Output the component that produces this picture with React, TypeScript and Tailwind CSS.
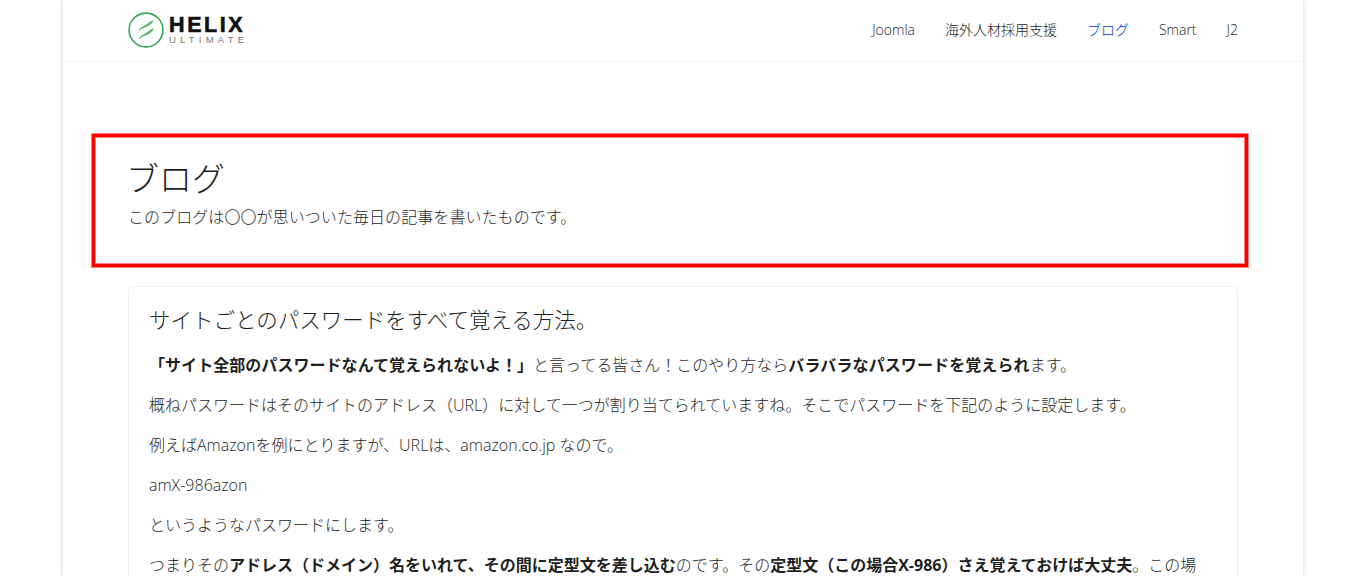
const jp = "font-['Open_Sans','Noto_Sans_CJK_JP',sans-serif]";

function Logo() {
  return (
    <div className="flex items-center gap-[5px]">
      <svg className="-mt-[2px]" width="36" height="36" viewBox="0 0 36 36" fill="none">
        <circle cx="18" cy="18" r="16.9" stroke="#34a853" strokeWidth="1.6" />
        <path d="M10.8 19.5C10.8 15.5 15 14.8 18 12.8C20.5 11 22.5 9 25.2 8C24.6 11.6 21.8 13.4 18.6 14.8C15.5 16.2 12.4 16.8 10.8 19.5Z" fill="#58b96c" />
        <path d="M11.3 27.5C11.3 23.5 15.5 22.8 18.5 20.8C21 19 23 17 25.7 16C25.1 19.6 22.3 21.4 19.1 22.8C16 24.2 12.9 24.8 11.3 27.5Z" fill="#58b96c" />
      </svg>
      <div className="flex flex-col leading-none font-['Liberation_Sans',sans-serif]">
        <span className="text-[21.5px] leading-[17px] font-bold text-[#111] tracking-[2.6px] [-webkit-text-stroke:0.6px_#111]">HELIX</span>
        <span className="text-[9.5px] leading-[10px] mt-[1px] font-normal text-[#777] tracking-[4.2px]">ULTIMATE</span>
      </div>
    </div>
  );
}

function Header() {
  const items = [
    { t: "Joomla" },
    { t: "海外人材採用支援" },
    { t: "ブログ", active: true },
    { t: "Smart" },
    { t: "J2" },
  ];
  return (
    <header className="h-[62px] border-b border-[#f5f5f5] flex items-center justify-between pl-[65px] pr-[65px]">
      <Logo />
      <nav className="flex gap-[30px] text-[14px] font-light -mt-[3px]">
        {items.map((i) => (
          <a key={i.t} className={i.active ? "text-[#0038d8]" : "text-[#1c1c1c]"}>{i.t}</a>
        ))}
      </nav>
    </header>
  );
}

export default function App() {
  return (
    <div className={`h-[576px] overflow-hidden bg-white ${jp} text-[#1f1f1f] font-light`}>
      <div className="w-[1240px] h-[576px] mx-auto bg-white shadow-[0_0_5px_rgba(0,0,0,0.2)]">
        <Header />
        <main className="pt-[72px]">
          <section className="ml-[29px] w-[1156px] h-[133px] border-[3px] border-[#ff0000] shadow-[0_0_0_1px_#ff7f7f,inset_0_0_0_1px_#ff7f7f] pl-[33px] pr-[32px] pt-[19px]">
            <h1 className="text-[33px] leading-[46px] font-light -ml-[2px]">ブログ</h1>
            <p className="text-[16px] leading-[24px] mt-[3px] font-light tracking-[0.07px]">このブログは〇〇が思いついた毎日の記事を書いたものです。</p>
          </section>
          <article className="mx-[65px] mt-[19px] border border-[#f0f0f0] rounded-[3px] px-[20px] pt-[15px] text-[16px] leading-[24px]">
            <h2 className="text-[21.5px] leading-[36px] mb-[15px] font-light">サイトごとのパスワードをすべて覚える方法。</h2>
            <p className="mb-[16px]"><strong className="font-bold tracking-[0.05px]">「サイト全部のパスワードなんて覚えられないよ！」</strong>と言ってる皆さん！このやり方なら<strong className="font-bold tracking-[0.1px]">バラバラなパスワードを覚えられ</strong>ます。</p>
            <p className="mb-[16px]">概ねパスワードはそのサイトのアドレス（URL）に対して一つが割り当てられていますね。そこでパスワードを下記のように設定します。</p>
            <p className="mb-[16px]">例えばAmazonを例にとりますが、URLは、amazon.co.jp なので。</p>
            <p className="mb-[16px]">amX-986azon</p>
            <p className="mb-[16px]">というようなパスワードにします。</p>
            <p className="mb-[16px]">つまりその<strong className="font-bold">アドレス（ドメイン）名をいれて、その間に定型文を差し込む</strong>のです。その<strong className="font-bold">定型文（この場合X-986）さえ覚えておけば大丈夫</strong>。この場合、パスワードを忘れても思い出せます。</p>
          </article>
        </main>
      </div>
    </div>
  );
}
